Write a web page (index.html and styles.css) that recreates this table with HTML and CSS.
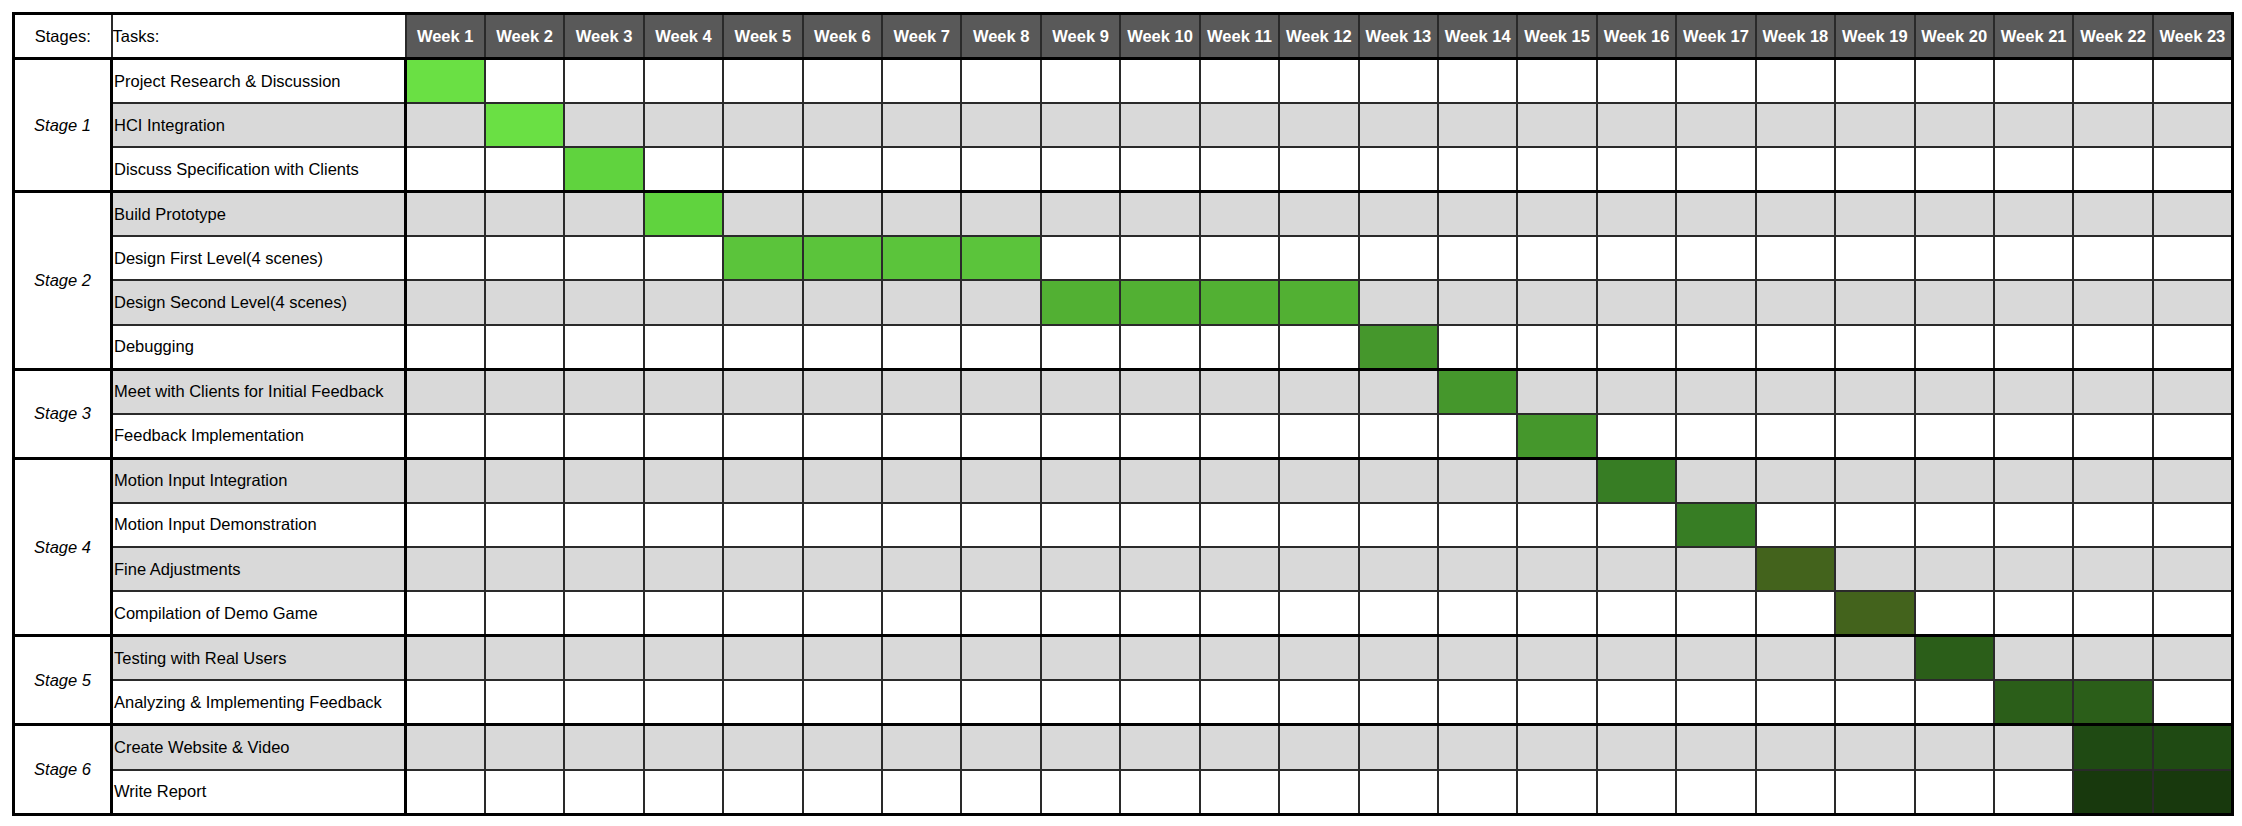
FILE: index.html
```html
<!DOCTYPE html>
<html>
<head>
<meta charset="utf-8">
<title>Project Gantt Chart</title>
<link rel="stylesheet" href="styles.css">
</head>
<body>
<table class="gantt">
<colgroup>
<col class="col-stage"><col class="col-task">
<col><col><col><col><col><col><col><col><col><col><col><col><col><col><col><col><col><col><col><col><col><col><col>
</colgroup>
<thead>
<tr class="head">
<th class="h-stage">Stages:</th><th class="h-task">Tasks:</th>
<th class="wk">Week 1</th><th class="wk">Week 2</th><th class="wk">Week 3</th><th class="wk">Week 4</th><th class="wk">Week 5</th><th class="wk">Week 6</th><th class="wk">Week 7</th><th class="wk">Week 8</th><th class="wk">Week 9</th><th class="wk">Week 10</th><th class="wk">Week 11</th><th class="wk">Week 12</th><th class="wk">Week 13</th><th class="wk">Week 14</th><th class="wk">Week 15</th><th class="wk">Week 16</th><th class="wk">Week 17</th><th class="wk">Week 18</th><th class="wk">Week 19</th><th class="wk">Week 20</th><th class="wk">Week 21</th><th class="wk">Week 22</th><th class="wk">Week 23</th>
</tr>
</thead>
<tbody>
<tr class="gs">
<td class="stage" rowspan="3">Stage 1</td><td class="task">Project Research &amp; Discussion</td>
<td class="g1"></td><td></td><td></td><td></td><td></td><td></td><td></td><td></td><td></td><td></td><td></td><td></td><td></td><td></td><td></td><td></td><td></td><td></td><td></td><td></td><td></td><td></td><td></td>
</tr>
<tr class="alt">
<td class="task">HCI Integration</td>
<td></td><td class="g1"></td><td></td><td></td><td></td><td></td><td></td><td></td><td></td><td></td><td></td><td></td><td></td><td></td><td></td><td></td><td></td><td></td><td></td><td></td><td></td><td></td><td></td>
</tr>
<tr>
<td class="task">Discuss Specification with Clients</td>
<td></td><td></td><td class="g2"></td><td></td><td></td><td></td><td></td><td></td><td></td><td></td><td></td><td></td><td></td><td></td><td></td><td></td><td></td><td></td><td></td><td></td><td></td><td></td><td></td>
</tr>
<tr class="gs alt">
<td class="stage" rowspan="4">Stage 2</td><td class="task">Build Prototype</td>
<td></td><td></td><td></td><td class="g2"></td><td></td><td></td><td></td><td></td><td></td><td></td><td></td><td></td><td></td><td></td><td></td><td></td><td></td><td></td><td></td><td></td><td></td><td></td><td></td>
</tr>
<tr>
<td class="task">Design First Level(4 scenes)</td>
<td></td><td></td><td></td><td></td><td class="g3"></td><td class="g3"></td><td class="g3"></td><td class="g3"></td><td></td><td></td><td></td><td></td><td></td><td></td><td></td><td></td><td></td><td></td><td></td><td></td><td></td><td></td><td></td>
</tr>
<tr class="alt">
<td class="task">Design Second Level(4 scenes)</td>
<td></td><td></td><td></td><td></td><td></td><td></td><td></td><td></td><td class="g4"></td><td class="g4"></td><td class="g4"></td><td class="g4"></td><td></td><td></td><td></td><td></td><td></td><td></td><td></td><td></td><td></td><td></td><td></td>
</tr>
<tr>
<td class="task">Debugging</td>
<td></td><td></td><td></td><td></td><td></td><td></td><td></td><td></td><td></td><td></td><td></td><td></td><td class="g5"></td><td></td><td></td><td></td><td></td><td></td><td></td><td></td><td></td><td></td><td></td>
</tr>
<tr class="gs alt">
<td class="stage" rowspan="2">Stage 3</td><td class="task">Meet with Clients for Initial Feedback</td>
<td></td><td></td><td></td><td></td><td></td><td></td><td></td><td></td><td></td><td></td><td></td><td></td><td></td><td class="g5"></td><td></td><td></td><td></td><td></td><td></td><td></td><td></td><td></td><td></td>
</tr>
<tr>
<td class="task">Feedback Implementation</td>
<td></td><td></td><td></td><td></td><td></td><td></td><td></td><td></td><td></td><td></td><td></td><td></td><td></td><td></td><td class="g5"></td><td></td><td></td><td></td><td></td><td></td><td></td><td></td><td></td>
</tr>
<tr class="gs alt">
<td class="stage" rowspan="4">Stage 4</td><td class="task">Motion Input Integration</td>
<td></td><td></td><td></td><td></td><td></td><td></td><td></td><td></td><td></td><td></td><td></td><td></td><td></td><td></td><td></td><td class="g6"></td><td></td><td></td><td></td><td></td><td></td><td></td><td></td>
</tr>
<tr>
<td class="task">Motion Input Demonstration</td>
<td></td><td></td><td></td><td></td><td></td><td></td><td></td><td></td><td></td><td></td><td></td><td></td><td></td><td></td><td></td><td></td><td class="g6"></td><td></td><td></td><td></td><td></td><td></td><td></td>
</tr>
<tr class="alt">
<td class="task">Fine Adjustments</td>
<td></td><td></td><td></td><td></td><td></td><td></td><td></td><td></td><td></td><td></td><td></td><td></td><td></td><td></td><td></td><td></td><td></td><td class="g7"></td><td></td><td></td><td></td><td></td><td></td>
</tr>
<tr>
<td class="task">Compilation of Demo Game</td>
<td></td><td></td><td></td><td></td><td></td><td></td><td></td><td></td><td></td><td></td><td></td><td></td><td></td><td></td><td></td><td></td><td></td><td></td><td class="g7"></td><td></td><td></td><td></td><td></td>
</tr>
<tr class="gs alt">
<td class="stage" rowspan="2">Stage 5</td><td class="task">Testing with Real Users</td>
<td></td><td></td><td></td><td></td><td></td><td></td><td></td><td></td><td></td><td></td><td></td><td></td><td></td><td></td><td></td><td></td><td></td><td></td><td></td><td class="g8"></td><td></td><td></td><td></td>
</tr>
<tr>
<td class="task">Analyzing &amp; Implementing Feedback</td>
<td></td><td></td><td></td><td></td><td></td><td></td><td></td><td></td><td></td><td></td><td></td><td></td><td></td><td></td><td></td><td></td><td></td><td></td><td></td><td></td><td class="g8"></td><td class="g8"></td><td></td>
</tr>
<tr class="gs alt">
<td class="stage" rowspan="2">Stage 6</td><td class="task">Create Website &amp; Video</td>
<td></td><td></td><td></td><td></td><td></td><td></td><td></td><td></td><td></td><td></td><td></td><td></td><td></td><td></td><td></td><td></td><td></td><td></td><td></td><td></td><td></td><td class="g9"></td><td class="g9"></td>
</tr>
<tr>
<td class="task">Write Report</td>
<td></td><td></td><td></td><td></td><td></td><td></td><td></td><td></td><td></td><td></td><td></td><td></td><td></td><td></td><td></td><td></td><td></td><td></td><td></td><td></td><td></td><td class="g10"></td><td class="g10"></td>
</tr>
</tbody>
</table>
</body>
</html>
```
FILE: styles.css
```css
html, body {
  margin: 0;
  padding: 0;
  background: #ffffff;
}

body {
  padding: 12px 0 0 12px;
  font-family: "Liberation Sans", Arial, sans-serif;
  color: #000;
}

.gantt {
  border-collapse: collapse;
  table-layout: fixed;
  width: 2222px;
  border: 3px solid #000;
}

.col-stage { width: 98px; }
.col-task { width: 294px; }

.gantt th,
.gantt td {
  border: 2px solid #2a2a2a;
  padding: 0;
  font-size: 16.5px;
  font-weight: normal;
  white-space: nowrap;
  overflow: hidden;
  background: #fff;
}

.head th {
  height: 42px;
  border-bottom: 3px solid #000;
}

.h-stage {
  text-align: center;
  border-right: 3px solid #000;
}

.h-task {
  text-align: left;
  padding-left: 1px;
  border-right: 3px solid #000;
}

.head .wk {
  background: #595959;
  color: #fff;
  font-weight: bold;
  font-size: 16.5px;
  text-align: center;
  border-top: 3px solid #000;
}

.gantt tbody td {
  height: 42.1px;
}

.gantt .stage {
  text-align: center;
  font-style: italic;
  border-right: 3px solid #000;
  background: #fff;
}

.gantt .task {
  text-align: left;
  padding-left: 1px;
  border-right: 3px solid #000;
}

.gs td {
  border-top: 3px solid #000;
}

.alt td {
  background: #d9d9d9;
}

.alt td.stage { background: #fff; }

.gantt td.g1 { background: #6ae044; }
.gantt td.g2 { background: #60d33e; }
.gantt td.g3 { background: #5bc43b; }
.gantt td.g4 { background: #52b033; }
.gantt td.g5 { background: #45972c; }
.gantt td.g6 { background: #377d24; }
.gantt td.g7 { background: #43631c; }
.gantt td.g8 { background: #2b5e19; }
.gantt td.g9 { background: #1f4a13; }
.gantt td.g10 { background: #18390d; }
```
